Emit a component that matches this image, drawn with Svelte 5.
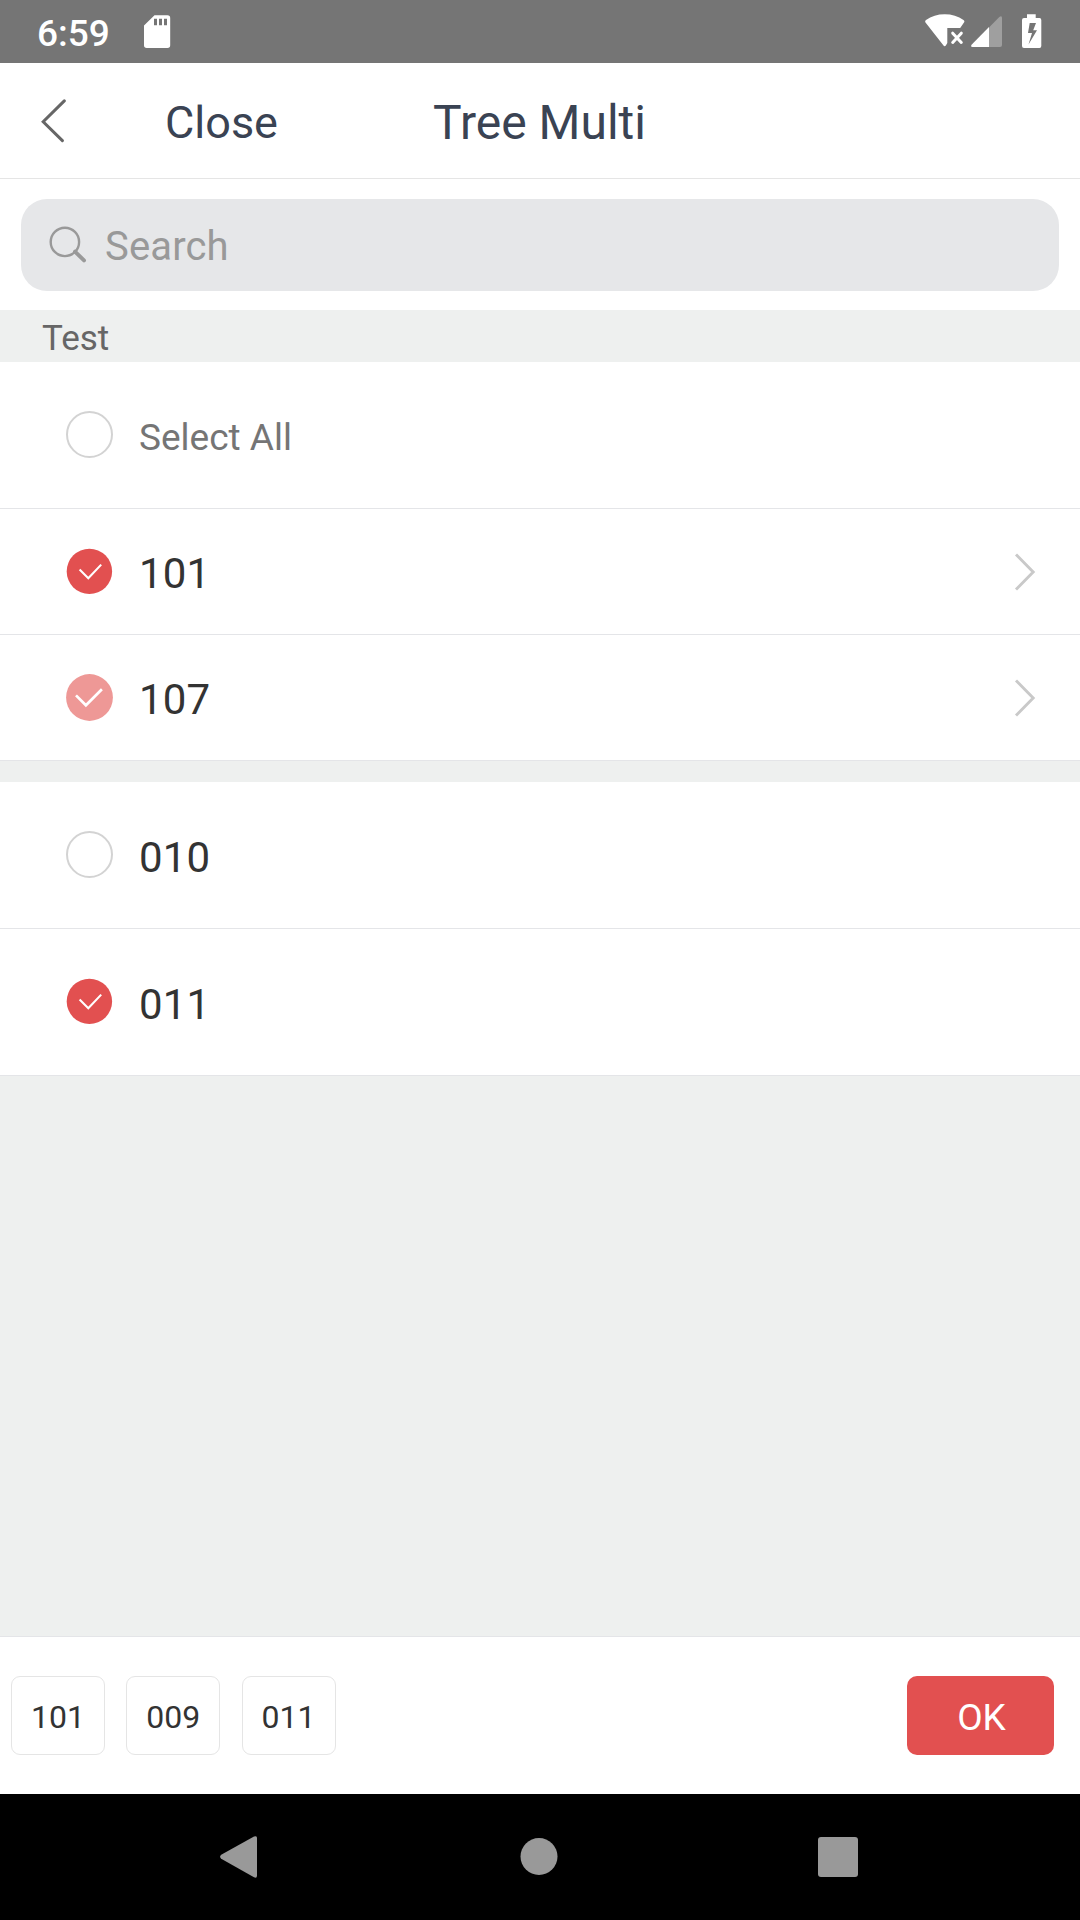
<script lang="ts">
  type Check = 'off' | 'on' | 'partial';
  type Item = { label: string; check: Check; branch?: boolean };

  const branches: Item[] = [
    { label: '101', check: 'on', branch: true },
    { label: '107', check: 'partial', branch: true },
  ];
  const leaves: Item[] = [
    { label: '010', check: 'off' },
    { label: '011', check: 'on' },
  ];
  const chosen = ['101', '009', '011'];
</script>

{#snippet checkbox(state: Check)}
  <svg class="check" width="47" height="47" viewBox="0 0 47 47">
    {#if state === 'off'}
      <circle cx="23.5" cy="23.5" r="22.5" fill="#fff" stroke="#d3d3d3" stroke-width="2" />
    {:else if state === 'on'}
      <circle cx="23.4" cy="23.4" r="22.7" fill="#e25050" />
      <path d="M13.6 21.6L22.3 30.3L35.2 16.6" fill="none" stroke="#fff" stroke-width="2.1" />
    {:else}
      <circle cx="23.5" cy="23.5" r="23.4" fill="#ee9896" />
      <path d="M10 21.4L19.9 31.3L35.9 15.3" fill="none" stroke="#fff" stroke-width="2.7" />
    {/if}
  </svg>
{/snippet}

{#snippet row(item: Item)}
  <div class="row" class:short={item.branch}>
    {@render checkbox(item.check)}
    <span class="label">{item.label}</span>
    {#if item.branch}
      <svg class="go" width="22" height="38" viewBox="0 0 22 38">
        <path d="M2 1.5L19.2 19L2 36.5" fill="none" stroke="#c9c9c9" stroke-width="2.9" />
      </svg>
    {/if}
  </div>
{/snippet}

<div class="screen">
  <div class="status">
    <span class="time">6:59</span>
    <svg class="sd" width="27" height="34" viewBox="0 0 27 34">
      <path fill="#fff" fill-rule="evenodd" d="M10.5 .3H23.5Q26.2 .3 26.2 3V30.3Q26.2 33 23.5 33H2.7Q0 33 0 30.3V10.5ZM10 3.7V10.3H13V3.7ZM15 3.7V10.3H18V3.7ZM20 3.7V10.3H23V3.7Z" />
    </svg>
    <svg class="signals" width="118" height="36" viewBox="0 0 118 36">
      <path fill="#fff" d="M.5 9.5Q-.4 8 1 7Q9 1.2 19.7 1.2Q30.5 1.2 38.5 7Q40 8 39 9.5L35.2 15H22.3V30L21 32.3Q19.7 34 18.3 32.3Z" />
      <path stroke="#fff" stroke-width="3" d="M27.7 20.2L36.3 29.4M36.3 20.2L27.7 29.4" stroke-linecap="round" />
      <path fill="#9f9f9f" d="M64 14.5L74.3 4Q77 2 77 5V32Q77 34 75 34H64Z" />
      <path fill="#fff" d="M64 14V34H47.5Q45 34 46.8 31.6Z" />
      <path fill="#fff" fill-rule="evenodd" d="M102 1.2H110.7V5H114.5Q116.3 5 116.3 7V33Q116.3 35 114.5 35H99Q97 35 97 33V7Q97 5 99 5H102ZM104.7 10L103 20H107L103.5 31.5L112 17.3H108.2L111 10Z" />
    </svg>
  </div>

  <header>
    <svg class="back" width="26" height="44" viewBox="0 0 26 44">
      <path d="M24.3 1.9L3.2 22.7L22.4 41.6" fill="none" stroke="#666" stroke-width="3" stroke-linecap="round" />
    </svg>
    <span class="close">Close</span>
    <h1>Tree Multi</h1>
  </header>

  <div class="searchbar">
    <div class="field">
      <svg width="38" height="38" viewBox="0 0 38 38">
        <circle cx="15.9" cy="15.9" r="14.2" fill="none" stroke="#999" stroke-width="2.4" />
        <path d="M26 25.6L35 34.4" stroke="#999" stroke-width="3.9" stroke-linecap="round" />
      </svg>
      <span>Search</span>
    </div>
  </div>

  <div class="section">Test</div>

  <div class="row all">
    {@render checkbox('off')}
    <span class="label">Select All</span>
  </div>
  {#each branches as item}
    {@render row(item)}
  {/each}
  <div class="gap"></div>
  {#each leaves as item}
    {@render row(item)}
  {/each}

  <footer>
    <div class="chips">
      {#each chosen as name}
        <span class="chip">{name}</span>
      {/each}
    </div>
    <button>OK</button>
  </footer>

  <nav>
    <svg width="38" height="44" viewBox="0 0 38 44">
      <path fill="#999" d="M1.2 19.8L34 1.6Q37 .2 37 3V40.4Q37 43.6 34 42.2L1.2 23.8Q-1 21.8 1.2 19.8Z" />
    </svg>
    <svg width="40" height="38" viewBox="0 0 40 38">
      <circle cx="21" cy="18.5" r="18.5" fill="#999" />
    </svg>
    <svg width="40" height="40" viewBox="0 0 40 40">
      <rect width="40" height="40" rx="3" fill="#999" />
    </svg>
  </nav>
</div>

<style>
  .screen {
    display: flex;
    flex-direction: column;
    width: 1080px;
    height: 1920px;
    overflow: hidden;
    background: #eef0ef;
    font-family: Roboto, "Liberation Sans", sans-serif;
    color: #333;
  }
  .screen > * {
    box-sizing: border-box;
    flex: none;
  }
  svg {
    display: block;
    flex: none;
  }
  .status {
    display: flex;
    height: 63px;
    padding: 0 37px;
    background: #757575;
  }
  .time {
    width: 107px;
    color: #fff;
    font-size: 37px;
    font-weight: 500;
    line-height: 67px;
  }
  .sd {
    margin-top: 15px;
  }
  .signals {
    margin: 13px 0 0 auto;
  }
  header {
    display: flex;
    height: 116px;
    border-bottom: 1px solid #e5e5e5;
    background: #fff;
    color: #3a4353;
  }
  .back {
    margin: 36px 0 0 40px;
  }
  .close {
    width: 268px;
    margin-left: 99px;
    font-size: 45px;
    line-height: 119px;
  }
  h1 {
    margin: 0;
    font-size: 48px;
    font-weight: 400;
    line-height: 119px;
    white-space: nowrap;
  }
  .searchbar {
    height: 131px;
    padding: 20px 21px 19px;
    background: #fff;
  }
  .field {
    display: flex;
    height: 92px;
    padding-left: 28px;
    border-radius: 26px;
    background: #e6e7e9;
    color: #999;
    font-size: 40px;
    line-height: 95px;
    letter-spacing: 0.15px;
  }
  .field svg {
    margin: 27px 18px 0 0;
  }
  .section {
    height: 52px;
    padding-left: 42px;
    color: #666;
    font-size: 35px;
    line-height: 58px;
  }
  .row {
    display: flex;
    align-items: center;
    height: 147px;
    padding: 0 44px 0 66px;
    border-bottom: 1px solid #e4e5e8;
    background: #fff;
  }
  .row:not(.short) .check {
    margin-bottom: 2px;
  }
  .row.short {
    height: 126px;
  }
  .label {
    margin-left: 26px;
    padding-top: 5px;
    font-size: 42px;
    line-height: 50px;
    letter-spacing: 0.2px;
  }
  .all .label {
    color: #757575;
    font-size: 37px;
    letter-spacing: 0;
  }
  .go {
    margin-left: auto;
  }
  .gap {
    height: 21px;
  }
  footer {
    display: flex;
    align-items: center;
    justify-content: space-between;
    height: 158px;
    margin-top: auto;
    padding: 0 26px 0 11px;
    border-top: 1px solid #e4e5e8;
    background: #fff;
  }
  .chips {
    display: flex;
    gap: 21.3px;
  }
  .chip {
    box-sizing: border-box;
    width: 94px;
    height: 79px;
    border: 1px solid #e5e5e5;
    border-radius: 9px;
    font-size: 32px;
    line-height: 80px;
    text-align: center;
  }
  button {
    width: 147px;
    height: 79px;
    padding: 4px 0 0 2px;
    border: 0;
    border-radius: 10px;
    background: #e25050;
    color: #fff;
    font: 37px/75px Roboto, "Liberation Sans", sans-serif;
  }
  nav {
    display: flex;
    align-items: center;
    justify-content: space-between;
    height: 126px;
    padding: 0 222px 0 220px;
    background: #000;
  }
</style>
